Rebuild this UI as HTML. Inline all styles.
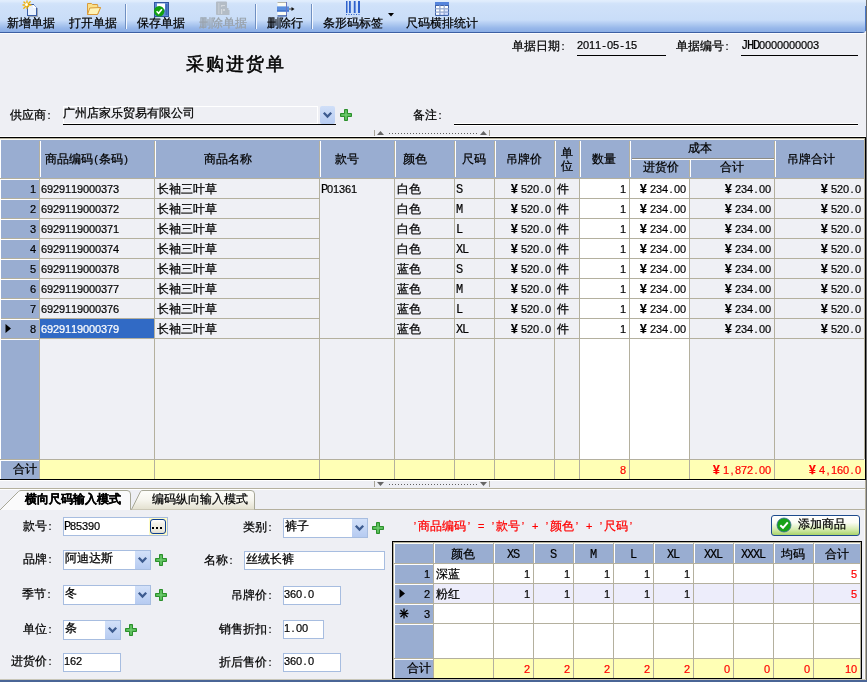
<!DOCTYPE html>
<html><head><meta charset="utf-8"><style>
html,body{margin:0;padding:0;}
body{width:867px;height:682px;overflow:hidden;position:relative;background:#eeeff4;font-family:'Liberation Sans',sans-serif;}
body>div,body>svg{position:absolute;}
.t{white-space:nowrap;will-change:transform;}
.s{will-change:transform;white-space:nowrap;font-size:12px;line-height:12px;height:12px;-webkit-text-stroke-width:0.25px;}
.s i.L{font-family:'Liberation Mono',monospace;font-size:12px;position:relative;top:1px}
.s i{-webkit-text-stroke-width:0.2px;display:inline-block;width:6px;text-align:center;font-style:normal;font-size:11px;vertical-align:top;height:12px;line-height:12px}
.s b.y{display:inline-block;width:12px;text-align:left;padding-left:2px;box-sizing:border-box;font-size:12px;font-weight:bold;vertical-align:top;height:12px;line-height:12px}
</style></head><body>
<div style="left:0;top:0;width:866px;height:33px;border-bottom-right-radius:4px;background:linear-gradient(to bottom,#e2eefd 0px,#dceafc 2px,#d3e4fa 3px,#cfe1f9 6px,#c9ddf8 20px,#bcd3f5 22px,#aac6ef 25px,#98b8ea 28px,#8aaee5 32px,#3c5fa3 32px,#3c5fa3 33px)"></div>
<div style="left:0px;top:33px;width:866px;height:1px;background:#fbfcfe;"></div>
<div style="left:865px;top:6px;width:1px;height:25px;background:#4a78c8;"></div>
<div style="left:125px;top:4px;width:1px;height:25px;background:#7090c2;"></div>
<div style="left:126px;top:4px;width:1px;height:25px;background:#f4f8ff;"></div>
<div style="left:255px;top:4px;width:1px;height:25px;background:#7090c2;"></div>
<div style="left:256px;top:4px;width:1px;height:25px;background:#f4f8ff;"></div>
<div style="left:311px;top:4px;width:1px;height:25px;background:#7090c2;"></div>
<div style="left:312px;top:4px;width:1px;height:25px;background:#f4f8ff;"></div>
<div class="s" style="left:7px;top:17px;color:#000">新增单据</div>
<div class="s" style="left:69px;top:17px;color:#000">打开单据</div>
<div class="s" style="left:137px;top:17px;color:#000">保存单据</div>
<div class="s" style="left:199px;top:17px;color:#98a0a8">删除单据</div>
<div class="s" style="left:267px;top:17px;color:#000">删除行</div>
<div class="s" style="left:323px;top:17px;color:#000">条形码标签</div>
<div class="s" style="left:406px;top:17px;color:#000">尺码横排统计</div>
<svg style="left:20px;top:0px" width="20" height="18" viewBox="0 0 20 18" shape-rendering="crispEdges">
<path d="M7 4 H13 L17 8 V16 H7 Z" fill="#eaf2fd"/>
<rect x="7" y="4" width="7" height="1" fill="#3a5ea6"/>
<rect x="7" y="4" width="1" height="12" fill="#3a5ea6"/>
<rect x="7" y="15" width="10" height="1" fill="#3a5ea6"/>
<rect x="16" y="8" width="1" height="8" fill="#3a5ea6"/>
<rect x="17" y="8" width="1" height="9" fill="#a0a8b4"/>
<rect x="8" y="16" width="10" height="1" fill="#a0a8b4"/>
<path d="M13 4.5 L16.5 8" stroke="#3a5ea6" stroke-width="1" shape-rendering="auto"/>
<path d="M13 5 V8 H16" fill="#ffffff"/>
<g stroke="#f2b000" stroke-width="1.3" stroke-linecap="round" shape-rendering="auto"><line x1="3" y1="5" x2="11" y2="5"/><line x1="7" y1="1" x2="7" y2="8.5"/><line x1="3.8" y1="8.2" x2="10.2" y2="1.8"/><line x1="4" y1="2" x2="8.5" y2="6.5"/></g>
<circle cx="6.5" cy="4.5" r="1.5" fill="#fffff0" shape-rendering="auto"/>
</svg>
<svg style="left:86px;top:1px" width="16" height="15" viewBox="0 0 16 15">
<path d="M1.5 2.5 L5.5 2.5 L6.5 3.5 L11.5 3.5 L12 6.5 L14.5 6.5 L11.5 13.5 L1.5 13.5 Z" fill="#fbe08a" stroke="#d79a3c" stroke-width="1"/>
<path d="M3.8 7 L14.5 6.5 L11.5 13.5 L1.5 13.5 Z" fill="#fff4b8" stroke="#d99a3a" stroke-width="1"/>
</svg>
<svg style="left:153px;top:1px" width="17" height="17" viewBox="0 0 17 17">
<rect x="1.5" y="1.5" width="14" height="14" fill="#5d8ad4" stroke="#2f55a0"/>
<rect x="4" y="2.5" width="8" height="6" fill="#ffffff"/>
<rect x="12.5" y="3" width="2" height="11" fill="#3d69b8"/>
<circle cx="6.2" cy="10.3" r="5.2" fill="#12a012"/>
<path d="M3.6 10.3 L5.6 12.3 L8.9 8.3" fill="none" stroke="#fff" stroke-width="1.6"/>
</svg>
<svg style="left:215px;top:1px" width="16" height="16" viewBox="0 0 16 16">
<path d="M2 0.5 H11 Q12 0.5 12 1.5 V7 H13.5 V9 H14.5 V14 H2 Q1 14 1 13 V1.5 Q1 0.5 2 0.5 Z" fill="#b3bcc6"/>
<rect x="3" y="2" width="1.5" height="11" fill="#c2c9d1"/>
<path d="M6 4.5 H10 M6 5.5 L7.5 4.5" stroke="#d4d9df" stroke-width="1.2"/>
<rect x="6" y="8" width="1.2" height="5" fill="#d4d9df"/>
<rect x="8" y="8" width="2" height="2" fill="#d0d6dc"/>
</svg>
<svg style="left:276px;top:1px" width="19" height="16" viewBox="0 0 19 16">
<rect x="1.5" y="1" width="8.5" height="4" fill="#fdfdf3"/>
<rect x="1.5" y="1" width="8.5" height="1" fill="#b4b4a8"/>
<rect x="1.5" y="10.5" width="8.5" height="4" fill="#fdfdf3"/>
<rect x="1" y="5.5" width="12" height="5" fill="#5a8ede"/>
<rect x="1" y="9.5" width="12" height="1" fill="#3060c0"/>
<rect x="10" y="1" width="1" height="14" fill="#6a78c0"/>
<rect x="1.5" y="14.3" width="9.5" height="1.2" fill="#2b4f9f"/>
<path d="M13 8 L16 8" stroke="#707070" stroke-width="1.4"/>
<path d="M15.5 6 L18.5 8 L15.5 10 Z" fill="#101010"/>
</svg>
<svg style="left:344px;top:0px" width="18" height="16" viewBox="0 0 18 16">
<g fill="#2f62cc"><rect x="2" y="1" width="1.5" height="12"/><rect x="5" y="1" width="1.8" height="12"/><rect x="9.8" y="1" width="1.8" height="12"/><rect x="14" y="1" width="2" height="12"/></g>
<g fill="#2f62cc"><rect x="2" y="14" width="1" height="1"/><rect x="4.5" y="14" width="1" height="1"/><rect x="7" y="14" width="1" height="1"/><rect x="9.5" y="14" width="1" height="1"/><rect x="12" y="14" width="1" height="1"/><rect x="14.5" y="14" width="1" height="1"/></g>
</svg>
<svg style="left:388px;top:13px" width="6" height="4" viewBox="0 0 6 4"><path d="M0 0 L6 0 L3 3.5 Z" fill="#000"/></svg>
<svg style="left:434px;top:1px" width="16" height="15" viewBox="0 0 16 15">
<rect x="1" y="1" width="14" height="14" rx="1" fill="#3f62a8"/>
<rect x="1" y="1" width="14" height="3" fill="#5584dc"/>
<g fill="#ffffff"><rect x="2" y="5" width="3.5" height="2.5"/><rect x="6.3" y="5" width="3.5" height="2.5"/><rect x="10.5" y="5" width="3.5" height="2.5"/>
<rect x="2" y="8.2" width="3.5" height="2.5"/><rect x="6.3" y="8.2" width="3.5" height="2.5"/><rect x="10.5" y="8.2" width="3.5" height="2.5" fill="#dde6ff"/>
<rect x="2" y="11.4" width="3.5" height="2.5"/><rect x="6.3" y="11.4" width="3.5" height="2.5" fill="#e6ebff"/><rect x="10.5" y="11.4" width="3.5" height="2.5" fill="#cfdcff"/></g>
<g fill="#b8c6e0"><rect x="1" y="7.6" width="14" height="0.6"/><rect x="1" y="10.8" width="14" height="0.6"/><rect x="5.6" y="4" width="0.6" height="10"/><rect x="9.9" y="4" width="0.6" height="10"/></g>
</svg>
<div class="t" style="left:186px;top:54px;font-size:18px;letter-spacing:2px;line-height:20px;-webkit-text-stroke:0.55px #000">采购进货单</div>
<div class="s" style="left:512px;top:40px;color:#000">单据日期<i>:</i></div>
<div class="s" style="left:577px;top:39px;color:#000"><i>2</i><i>0</i><i>1</i><i>1</i><i>-</i><i>0</i><i>5</i><i>-</i><i>1</i><i>5</i></div>
<div style="left:577px;top:55px;width:89px;height:1px;background:#000;"></div>
<div class="s" style="left:676px;top:40px;color:#000">单据编号<i>:</i></div>
<div class="s" style="left:741px;top:39px;color:#000"><i class="L">J</i><i class="L">H</i><i class="L">D</i><i>0</i><i>0</i><i>0</i><i>0</i><i>0</i><i>0</i><i>0</i><i>0</i><i>0</i><i>3</i></div>
<div style="left:741px;top:55px;width:117px;height:1px;background:#000;"></div>
<div class="s" style="left:10px;top:109px;color:#000">供应商<i>:</i></div>
<div style="left:63px;top:106px;width:253px;height:16px;border:1px solid #ffffff"></div>
<div class="s" style="left:63px;top:107px;color:#000">广州店家乐贸易有限公司</div>
<div style="left:63px;top:124px;width:273px;height:1px;background:#000;"></div>
<div style="left:320px;top:106px;width:15px;height:18px;background:linear-gradient(#d0dff8,#b7ccf2);border-radius:2px"></div>
<svg style="left:322px;top:111px" width="11" height="8" viewBox="0 0 11 8"><path d="M1.8 1.8 L5.5 5.5 L9.2 1.8" fill="none" stroke="#3d5b8f" stroke-width="2.3"/></svg>
<svg style="left:340px;top:109px" width="13" height="13" viewBox="0 0 13 13"><path d="M4.5 0.5 H7.5 V4.5 H11.5 V7.5 H7.5 V11.5 H4.5 V7.5 H0.5 V4.5 H4.5 Z" fill="#45b045" stroke="#2b8f2b" stroke-width="1"/><path d="M6 1.5 V10.5 M1.5 6 H10.5" stroke="#86d886" stroke-width="1" opacity="0.8"/></svg>
<div class="s" style="left:413px;top:109px;color:#000">备注<i>:</i></div>
<div style="left:454px;top:123px;width:404px;height:1px;background:#ffffff;"></div>
<div style="left:454px;top:124px;width:404px;height:1px;background:#000;"></div>
<div style="left:454px;top:125px;width:404px;height:1px;background:#ffffff;"></div>
<div style="left:374px;top:130px;width:1px;height:6px;background:#a8a498;"></div>
<div style="left:489px;top:130px;width:1px;height:6px;background:#a8a498;"></div>
<svg style="left:377px;top:131px" width="7" height="4" viewBox="0 0 7 4"><path d="M0 4 L3.5 0 L7 4 Z" fill="#666"/></svg>
<svg style="left:480px;top:131px" width="7" height="4" viewBox="0 0 7 4"><path d="M0 4 L3.5 0 L7 4 Z" fill="#666"/></svg>
<div style="left:389px;top:133px;width:88px;height:1px;background:repeating-linear-gradient(to right,#606060 0 1px,transparent 1px 3px)"></div>
<div style="left:0px;top:136px;width:866px;height:1px;background:#ffffff;"></div>
<div style="left:0px;top:137px;width:866px;height:1px;background:#000;"></div>
<div style="left:865px;top:137px;width:1px;height:343px;background:#000;"></div>
<div style="left:0px;top:479px;width:866px;height:1px;background:#000;"></div>
<div style="left:0px;top:138px;width:865px;height:1px;background:#b4b09e;"></div>
<div style="left:864px;top:138px;width:1px;height:321px;background:#b4b09e;"></div>
<div style="left:0px;top:139px;width:864px;height:39px;background:#99add1;"></div>
<div style="left:0px;top:139px;width:864px;height:1px;background:#fbfbf4;"></div>
<div style="left:0px;top:140px;width:1px;height:38px;background:#ffffff;"></div>
<div style="left:0px;top:178px;width:864px;height:1px;background:#b4b09e;"></div>
<div style="left:0px;top:179px;width:864px;height:280px;background:#eff0f5;"></div>
<div style="left:0px;top:179px;width:39px;height:280px;background:#99add1;"></div>
<div style="left:580px;top:179px;width:49px;height:280px;background:#ffffff;"></div>
<div style="left:630px;top:179px;width:59px;height:280px;background:#ffffff;"></div>
<div style="left:39px;top:141px;width:1px;height:36px;background:#b4b09e;"></div>
<div style="left:40px;top:141px;width:1px;height:36px;background:#ffffff;"></div>
<div style="left:154px;top:141px;width:1px;height:36px;background:#b4b09e;"></div>
<div style="left:155px;top:141px;width:1px;height:36px;background:#ffffff;"></div>
<div style="left:319px;top:141px;width:1px;height:36px;background:#b4b09e;"></div>
<div style="left:320px;top:141px;width:1px;height:36px;background:#ffffff;"></div>
<div style="left:394px;top:141px;width:1px;height:36px;background:#b4b09e;"></div>
<div style="left:395px;top:141px;width:1px;height:36px;background:#ffffff;"></div>
<div style="left:454px;top:141px;width:1px;height:36px;background:#b4b09e;"></div>
<div style="left:455px;top:141px;width:1px;height:36px;background:#ffffff;"></div>
<div style="left:494px;top:141px;width:1px;height:36px;background:#b4b09e;"></div>
<div style="left:495px;top:141px;width:1px;height:36px;background:#ffffff;"></div>
<div style="left:554px;top:141px;width:1px;height:36px;background:#b4b09e;"></div>
<div style="left:555px;top:141px;width:1px;height:36px;background:#ffffff;"></div>
<div style="left:579px;top:141px;width:1px;height:36px;background:#b4b09e;"></div>
<div style="left:580px;top:141px;width:1px;height:36px;background:#ffffff;"></div>
<div style="left:629px;top:141px;width:1px;height:36px;background:#b4b09e;"></div>
<div style="left:630px;top:141px;width:1px;height:36px;background:#ffffff;"></div>
<div style="left:689px;top:160px;width:1px;height:17px;background:#b4b09e;"></div>
<div style="left:690px;top:160px;width:1px;height:17px;background:#ffffff;"></div>
<div style="left:774px;top:141px;width:1px;height:36px;background:#b4b09e;"></div>
<div style="left:775px;top:141px;width:1px;height:36px;background:#ffffff;"></div>
<div style="left:632px;top:158px;width:142px;height:1px;background:#8e8c84;"></div>
<div style="left:632px;top:159px;width:142px;height:1px;background:#ffffff;"></div>
<div style="left:39px;top:179px;width:1px;height:280px;background:#b4b09e;"></div>
<div style="left:154px;top:179px;width:1px;height:280px;background:#b4b09e;"></div>
<div style="left:319px;top:179px;width:1px;height:280px;background:#b4b09e;"></div>
<div style="left:394px;top:179px;width:1px;height:280px;background:#b4b09e;"></div>
<div style="left:454px;top:179px;width:1px;height:280px;background:#b4b09e;"></div>
<div style="left:494px;top:179px;width:1px;height:280px;background:#b4b09e;"></div>
<div style="left:554px;top:179px;width:1px;height:280px;background:#b4b09e;"></div>
<div style="left:579px;top:179px;width:1px;height:280px;background:#b4b09e;"></div>
<div style="left:629px;top:179px;width:1px;height:280px;background:#b4b09e;"></div>
<div style="left:689px;top:179px;width:1px;height:280px;background:#b4b09e;"></div>
<div style="left:774px;top:179px;width:1px;height:280px;background:#b4b09e;"></div>
<div style="left:0px;top:198px;width:319px;height:1px;background:#b4b09e;"></div>
<div style="left:394px;top:198px;width:470px;height:1px;background:#b4b09e;"></div>
<div style="left:1px;top:199px;width:38px;height:1px;background:#ffffff;"></div>
<div style="left:0px;top:218px;width:319px;height:1px;background:#b4b09e;"></div>
<div style="left:394px;top:218px;width:470px;height:1px;background:#b4b09e;"></div>
<div style="left:1px;top:219px;width:38px;height:1px;background:#ffffff;"></div>
<div style="left:0px;top:238px;width:319px;height:1px;background:#b4b09e;"></div>
<div style="left:394px;top:238px;width:470px;height:1px;background:#b4b09e;"></div>
<div style="left:1px;top:239px;width:38px;height:1px;background:#ffffff;"></div>
<div style="left:0px;top:258px;width:319px;height:1px;background:#b4b09e;"></div>
<div style="left:394px;top:258px;width:470px;height:1px;background:#b4b09e;"></div>
<div style="left:1px;top:259px;width:38px;height:1px;background:#ffffff;"></div>
<div style="left:0px;top:278px;width:319px;height:1px;background:#b4b09e;"></div>
<div style="left:394px;top:278px;width:470px;height:1px;background:#b4b09e;"></div>
<div style="left:1px;top:279px;width:38px;height:1px;background:#ffffff;"></div>
<div style="left:0px;top:298px;width:319px;height:1px;background:#b4b09e;"></div>
<div style="left:394px;top:298px;width:470px;height:1px;background:#b4b09e;"></div>
<div style="left:1px;top:299px;width:38px;height:1px;background:#ffffff;"></div>
<div style="left:0px;top:318px;width:319px;height:1px;background:#b4b09e;"></div>
<div style="left:394px;top:318px;width:470px;height:1px;background:#b4b09e;"></div>
<div style="left:1px;top:319px;width:38px;height:1px;background:#ffffff;"></div>
<div style="left:0px;top:338px;width:319px;height:1px;background:#b4b09e;"></div>
<div style="left:394px;top:338px;width:470px;height:1px;background:#b4b09e;"></div>
<div style="left:319px;top:338px;width:75px;height:1px;background:#b4b09e;"></div>
<div style="left:1px;top:339px;width:38px;height:1px;background:#ffffff;"></div>
<div style="left:1px;top:179px;width:38px;height:1px;background:#ffffff;"></div>
<div style="left:0px;top:179px;width:1px;height:280px;background:#ffffff;"></div>
<div style="left:0px;top:459px;width:864px;height:1px;background:#b4b09e;"></div>
<div style="left:0px;top:460px;width:865px;height:19px;background:#ffffb5;"></div>
<div style="left:0px;top:460px;width:39px;height:19px;background:#99add1;"></div>
<div style="left:1px;top:460px;width:38px;height:1px;background:#ffffff;"></div>
<div style="left:0px;top:460px;width:1px;height:19px;background:#ffffff;"></div>
<div style="left:39px;top:460px;width:1px;height:19px;background:#b4b09e;"></div>
<div style="left:154px;top:460px;width:1px;height:19px;background:#b4b09e;"></div>
<div style="left:319px;top:460px;width:1px;height:19px;background:#b4b09e;"></div>
<div style="left:394px;top:460px;width:1px;height:19px;background:#b4b09e;"></div>
<div style="left:454px;top:460px;width:1px;height:19px;background:#b4b09e;"></div>
<div style="left:494px;top:460px;width:1px;height:19px;background:#b4b09e;"></div>
<div style="left:554px;top:460px;width:1px;height:19px;background:#b4b09e;"></div>
<div style="left:579px;top:460px;width:1px;height:19px;background:#b4b09e;"></div>
<div style="left:629px;top:460px;width:1px;height:19px;background:#b4b09e;"></div>
<div style="left:689px;top:460px;width:1px;height:19px;background:#b4b09e;"></div>
<div style="left:774px;top:460px;width:1px;height:19px;background:#b4b09e;"></div>
<div class="s" style="left:45px;top:153px;color:#000">商品编码<i>(</i>条码<i>)</i></div>
<div class="s" style="left:204px;top:153px;color:#000">商品名称</div>
<div class="s" style="left:335px;top:153px;color:#000">款号</div>
<div class="s" style="left:403px;top:153px;color:#000">颜色</div>
<div class="s" style="left:462px;top:153px;color:#000">尺码</div>
<div class="s" style="left:506px;top:153px;color:#000">吊牌价</div>
<div class="s" style="left:561px;top:147px;color:#000">单</div>
<div class="s" style="left:561px;top:160px;color:#000">位</div>
<div class="s" style="left:592px;top:153px;color:#000">数量</div>
<div class="s" style="left:688px;top:142px;color:#000">成本</div>
<div class="s" style="left:643px;top:161px;color:#000">进货价</div>
<div class="s" style="left:720px;top:161px;color:#000">合计</div>
<div class="s" style="left:787px;top:153px;color:#000">吊牌合计</div>
<div class="s" style="left:30px;top:183px;color:#000"><i>1</i></div>
<div class="s" style="left:41px;top:183px;color:#000"><i>6</i><i>9</i><i>2</i><i>9</i><i>1</i><i>1</i><i>9</i><i>0</i><i>0</i><i>0</i><i>3</i><i>7</i><i>3</i></div>
<div class="s" style="left:157px;top:183px;color:#000">长袖三叶草</div>
<div class="s" style="left:397px;top:183px;color:#000">白色</div>
<div class="s" style="left:456px;top:183px;color:#000"><i class="L">S</i></div>
<div class="s" style="left:509px;top:183px;color:#000"><b class="y">¥</b><i>5</i><i>2</i><i>0</i><i>.</i><i>0</i></div>
<div class="s" style="left:557px;top:183px;color:#000">件</div>
<div class="s" style="left:620px;top:183px;color:#000"><i>1</i></div>
<div class="s" style="left:638px;top:183px;color:#000"><b class="y">¥</b><i>2</i><i>3</i><i>4</i><i>.</i><i>0</i><i>0</i></div>
<div class="s" style="left:723px;top:183px;color:#000"><b class="y">¥</b><i>2</i><i>3</i><i>4</i><i>.</i><i>0</i><i>0</i></div>
<div class="s" style="left:819px;top:183px;color:#000"><b class="y">¥</b><i>5</i><i>2</i><i>0</i><i>.</i><i>0</i></div>
<div class="s" style="left:30px;top:203px;color:#000"><i>2</i></div>
<div class="s" style="left:41px;top:203px;color:#000"><i>6</i><i>9</i><i>2</i><i>9</i><i>1</i><i>1</i><i>9</i><i>0</i><i>0</i><i>0</i><i>3</i><i>7</i><i>2</i></div>
<div class="s" style="left:157px;top:203px;color:#000">长袖三叶草</div>
<div class="s" style="left:397px;top:203px;color:#000">白色</div>
<div class="s" style="left:456px;top:203px;color:#000"><i class="L">M</i></div>
<div class="s" style="left:509px;top:203px;color:#000"><b class="y">¥</b><i>5</i><i>2</i><i>0</i><i>.</i><i>0</i></div>
<div class="s" style="left:557px;top:203px;color:#000">件</div>
<div class="s" style="left:620px;top:203px;color:#000"><i>1</i></div>
<div class="s" style="left:638px;top:203px;color:#000"><b class="y">¥</b><i>2</i><i>3</i><i>4</i><i>.</i><i>0</i><i>0</i></div>
<div class="s" style="left:723px;top:203px;color:#000"><b class="y">¥</b><i>2</i><i>3</i><i>4</i><i>.</i><i>0</i><i>0</i></div>
<div class="s" style="left:819px;top:203px;color:#000"><b class="y">¥</b><i>5</i><i>2</i><i>0</i><i>.</i><i>0</i></div>
<div class="s" style="left:30px;top:223px;color:#000"><i>3</i></div>
<div class="s" style="left:41px;top:223px;color:#000"><i>6</i><i>9</i><i>2</i><i>9</i><i>1</i><i>1</i><i>9</i><i>0</i><i>0</i><i>0</i><i>3</i><i>7</i><i>1</i></div>
<div class="s" style="left:157px;top:223px;color:#000">长袖三叶草</div>
<div class="s" style="left:397px;top:223px;color:#000">白色</div>
<div class="s" style="left:456px;top:223px;color:#000"><i class="L">L</i></div>
<div class="s" style="left:509px;top:223px;color:#000"><b class="y">¥</b><i>5</i><i>2</i><i>0</i><i>.</i><i>0</i></div>
<div class="s" style="left:557px;top:223px;color:#000">件</div>
<div class="s" style="left:620px;top:223px;color:#000"><i>1</i></div>
<div class="s" style="left:638px;top:223px;color:#000"><b class="y">¥</b><i>2</i><i>3</i><i>4</i><i>.</i><i>0</i><i>0</i></div>
<div class="s" style="left:723px;top:223px;color:#000"><b class="y">¥</b><i>2</i><i>3</i><i>4</i><i>.</i><i>0</i><i>0</i></div>
<div class="s" style="left:819px;top:223px;color:#000"><b class="y">¥</b><i>5</i><i>2</i><i>0</i><i>.</i><i>0</i></div>
<div class="s" style="left:30px;top:243px;color:#000"><i>4</i></div>
<div class="s" style="left:41px;top:243px;color:#000"><i>6</i><i>9</i><i>2</i><i>9</i><i>1</i><i>1</i><i>9</i><i>0</i><i>0</i><i>0</i><i>3</i><i>7</i><i>4</i></div>
<div class="s" style="left:157px;top:243px;color:#000">长袖三叶草</div>
<div class="s" style="left:397px;top:243px;color:#000">白色</div>
<div class="s" style="left:456px;top:243px;color:#000"><i class="L">X</i><i class="L">L</i></div>
<div class="s" style="left:509px;top:243px;color:#000"><b class="y">¥</b><i>5</i><i>2</i><i>0</i><i>.</i><i>0</i></div>
<div class="s" style="left:557px;top:243px;color:#000">件</div>
<div class="s" style="left:620px;top:243px;color:#000"><i>1</i></div>
<div class="s" style="left:638px;top:243px;color:#000"><b class="y">¥</b><i>2</i><i>3</i><i>4</i><i>.</i><i>0</i><i>0</i></div>
<div class="s" style="left:723px;top:243px;color:#000"><b class="y">¥</b><i>2</i><i>3</i><i>4</i><i>.</i><i>0</i><i>0</i></div>
<div class="s" style="left:819px;top:243px;color:#000"><b class="y">¥</b><i>5</i><i>2</i><i>0</i><i>.</i><i>0</i></div>
<div class="s" style="left:30px;top:263px;color:#000"><i>5</i></div>
<div class="s" style="left:41px;top:263px;color:#000"><i>6</i><i>9</i><i>2</i><i>9</i><i>1</i><i>1</i><i>9</i><i>0</i><i>0</i><i>0</i><i>3</i><i>7</i><i>8</i></div>
<div class="s" style="left:157px;top:263px;color:#000">长袖三叶草</div>
<div class="s" style="left:397px;top:263px;color:#000">蓝色</div>
<div class="s" style="left:456px;top:263px;color:#000"><i class="L">S</i></div>
<div class="s" style="left:509px;top:263px;color:#000"><b class="y">¥</b><i>5</i><i>2</i><i>0</i><i>.</i><i>0</i></div>
<div class="s" style="left:557px;top:263px;color:#000">件</div>
<div class="s" style="left:620px;top:263px;color:#000"><i>1</i></div>
<div class="s" style="left:638px;top:263px;color:#000"><b class="y">¥</b><i>2</i><i>3</i><i>4</i><i>.</i><i>0</i><i>0</i></div>
<div class="s" style="left:723px;top:263px;color:#000"><b class="y">¥</b><i>2</i><i>3</i><i>4</i><i>.</i><i>0</i><i>0</i></div>
<div class="s" style="left:819px;top:263px;color:#000"><b class="y">¥</b><i>5</i><i>2</i><i>0</i><i>.</i><i>0</i></div>
<div class="s" style="left:30px;top:283px;color:#000"><i>6</i></div>
<div class="s" style="left:41px;top:283px;color:#000"><i>6</i><i>9</i><i>2</i><i>9</i><i>1</i><i>1</i><i>9</i><i>0</i><i>0</i><i>0</i><i>3</i><i>7</i><i>7</i></div>
<div class="s" style="left:157px;top:283px;color:#000">长袖三叶草</div>
<div class="s" style="left:397px;top:283px;color:#000">蓝色</div>
<div class="s" style="left:456px;top:283px;color:#000"><i class="L">M</i></div>
<div class="s" style="left:509px;top:283px;color:#000"><b class="y">¥</b><i>5</i><i>2</i><i>0</i><i>.</i><i>0</i></div>
<div class="s" style="left:557px;top:283px;color:#000">件</div>
<div class="s" style="left:620px;top:283px;color:#000"><i>1</i></div>
<div class="s" style="left:638px;top:283px;color:#000"><b class="y">¥</b><i>2</i><i>3</i><i>4</i><i>.</i><i>0</i><i>0</i></div>
<div class="s" style="left:723px;top:283px;color:#000"><b class="y">¥</b><i>2</i><i>3</i><i>4</i><i>.</i><i>0</i><i>0</i></div>
<div class="s" style="left:819px;top:283px;color:#000"><b class="y">¥</b><i>5</i><i>2</i><i>0</i><i>.</i><i>0</i></div>
<div class="s" style="left:30px;top:303px;color:#000"><i>7</i></div>
<div class="s" style="left:41px;top:303px;color:#000"><i>6</i><i>9</i><i>2</i><i>9</i><i>1</i><i>1</i><i>9</i><i>0</i><i>0</i><i>0</i><i>3</i><i>7</i><i>6</i></div>
<div class="s" style="left:157px;top:303px;color:#000">长袖三叶草</div>
<div class="s" style="left:397px;top:303px;color:#000">蓝色</div>
<div class="s" style="left:456px;top:303px;color:#000"><i class="L">L</i></div>
<div class="s" style="left:509px;top:303px;color:#000"><b class="y">¥</b><i>5</i><i>2</i><i>0</i><i>.</i><i>0</i></div>
<div class="s" style="left:557px;top:303px;color:#000">件</div>
<div class="s" style="left:620px;top:303px;color:#000"><i>1</i></div>
<div class="s" style="left:638px;top:303px;color:#000"><b class="y">¥</b><i>2</i><i>3</i><i>4</i><i>.</i><i>0</i><i>0</i></div>
<div class="s" style="left:723px;top:303px;color:#000"><b class="y">¥</b><i>2</i><i>3</i><i>4</i><i>.</i><i>0</i><i>0</i></div>
<div class="s" style="left:819px;top:303px;color:#000"><b class="y">¥</b><i>5</i><i>2</i><i>0</i><i>.</i><i>0</i></div>
<div class="s" style="left:30px;top:323px;color:#000"><i>8</i></div>
<div style="left:40px;top:319px;width:114px;height:19px;background:#316ac5;"></div>
<div class="s" style="left:41px;top:323px;color:#fff"><i>6</i><i>9</i><i>2</i><i>9</i><i>1</i><i>1</i><i>9</i><i>0</i><i>0</i><i>0</i><i>3</i><i>7</i><i>9</i></div>
<svg style="left:5px;top:324px" width="7" height="10" viewBox="0 0 7 10"><path d="M0.5 0 L6 4.5 L0.5 9 Z" fill="#000"/></svg>
<div class="s" style="left:157px;top:323px;color:#000">长袖三叶草</div>
<div class="s" style="left:397px;top:323px;color:#000">蓝色</div>
<div class="s" style="left:456px;top:323px;color:#000"><i class="L">X</i><i class="L">L</i></div>
<div class="s" style="left:509px;top:323px;color:#000"><b class="y">¥</b><i>5</i><i>2</i><i>0</i><i>.</i><i>0</i></div>
<div class="s" style="left:557px;top:323px;color:#000">件</div>
<div class="s" style="left:620px;top:323px;color:#000"><i>1</i></div>
<div class="s" style="left:638px;top:323px;color:#000"><b class="y">¥</b><i>2</i><i>3</i><i>4</i><i>.</i><i>0</i><i>0</i></div>
<div class="s" style="left:723px;top:323px;color:#000"><b class="y">¥</b><i>2</i><i>3</i><i>4</i><i>.</i><i>0</i><i>0</i></div>
<div class="s" style="left:819px;top:323px;color:#000"><b class="y">¥</b><i>5</i><i>2</i><i>0</i><i>.</i><i>0</i></div>
<div class="s" style="left:321px;top:183px;color:#000"><i class="L">P</i><i>0</i><i>1</i><i>3</i><i>6</i><i>1</i></div>
<div class="s" style="left:13px;top:463px;color:#000">合计</div>
<div class="s" style="left:620px;top:464px;color:#ff0000"><i>8</i></div>
<div class="s" style="left:711px;top:464px;color:#ff0000"><b class="y">¥</b><i>1</i><i>,</i><i>8</i><i>7</i><i>2</i><i>.</i><i>0</i><i>0</i></div>
<div class="s" style="left:807px;top:464px;color:#ff0000"><b class="y">¥</b><i>4</i><i>,</i><i>1</i><i>6</i><i>0</i><i>.</i><i>0</i></div>
<div style="left:0px;top:480px;width:865px;height:1px;background:#ffffff;"></div>
<div style="left:374px;top:481px;width:1px;height:6px;background:#a8a498;"></div>
<div style="left:489px;top:481px;width:1px;height:6px;background:#a8a498;"></div>
<svg style="left:377px;top:482px" width="7" height="4" viewBox="0 0 7 4"><path d="M0 0 L3.5 4 L7 0 Z" fill="#666"/></svg>
<svg style="left:480px;top:482px" width="7" height="4" viewBox="0 0 7 4"><path d="M0 0 L3.5 4 L7 0 Z" fill="#666"/></svg>
<div style="left:389px;top:484px;width:88px;height:1px;background:repeating-linear-gradient(to right,#606060 0 1px,transparent 1px 3px)"></div>
<div style="left:0px;top:488px;width:865px;height:1px;background:#b4b09e;"></div>
<div style="left:0px;top:489px;width:865px;height:1px;background:#ffffff;"></div>
<div style="left:866px;top:0px;width:1px;height:682px;background:#6e6e6e;"></div>
<div style="left:865px;top:480px;width:1px;height:200px;background:#b4b09e;"></div>
<div style="left:0px;top:509px;width:865px;height:1px;background:#b4b09e;"></div>
<svg style="left:0;top:489px" width="270" height="22" viewBox="0 0 270 22"><defs><linearGradient id="tg" x1="0" y1="0" x2="0" y2="1"><stop offset="0" stop-color="#fefefb"/><stop offset="0.5" stop-color="#f6f5ee"/><stop offset="1" stop-color="#e3e0cf"/></linearGradient></defs><path d="M131.5 20.5 L140.5 2.5 Q141 1.5 143 1.5 L251 1.5 Q254.5 1.5 254.5 5 L254.5 20.5" fill="url(#tg)" stroke="#a7a797" stroke-width="1"/><path d="M0.5 20.5 L18.5 2.5 Q19.5 1.5 21 1.5 L127 1.5 Q130.5 1.5 130.5 5 L130.5 20.5" fill="#fafafb" stroke="#a7a797" stroke-width="1"/><rect x="1" y="20" width="129" height="1" fill="#fafafb"/></svg>
<div class="s" style="left:25px;top:493px;color:#000;font-weight:bold">横向尺码输入模式</div>
<div class="s" style="left:152px;top:493px;color:#000">编码纵向输入模式</div>
<div style="left:0px;top:510px;width:865px;height:170px;background:#eeeff4;"></div>
<div style="left:864px;top:510px;width:1px;height:169px;background:#fafafc;"></div>
<div style="left:0px;top:679px;width:866px;height:1px;background:#c8c6b8;"></div>
<div style="left:0px;top:680px;width:867px;height:2px;background:#4a6596;"></div>
<div class="s" style="left:23px;top:520px;color:#000">款号<i>:</i></div>
<div style="left:63px;top:517px;width:103px;height:17px;background:#fff;border:1px solid #a7bde0"></div>
<div class="s" style="left:64px;top:520px;color:#000"><i class="L">P</i><i>8</i><i>5</i><i>3</i><i>9</i><i>0</i></div>
<div style="left:149px;top:518px;width:18px;height:17px;background:#fffcc4;"></div>
<div style="left:150px;top:519px;width:14px;height:13px;border:1px solid #0c3e8e;border-radius:3px;background:linear-gradient(#ffffff 0%,#f2f1e8 30%,#ebe9dc 85%,#dcdad0 100%)"></div>
<div style="left:152px;top:527px;width:2px;height:2px;background:#000;"></div>
<div style="left:156px;top:527px;width:2px;height:2px;background:#000;"></div>
<div style="left:160px;top:527px;width:2px;height:2px;background:#000;"></div>
<div class="s" style="left:243px;top:521px;color:#000">类别<i>:</i></div>
<div style="left:283px;top:518px;width:83px;height:18px;background:#fff;border:1px solid #a7bde0"></div>
<div style="left:352px;top:519px;width:15px;height:18px;background:linear-gradient(#d3e1f9,#b6cbf1)"></div>
<svg style="left:354px;top:524px" width="11" height="8" viewBox="0 0 11 8"><path d="M1.8 1.8 L5.5 5.5 L9.2 1.8" fill="none" stroke="#3d5b8f" stroke-width="2.3"/></svg>
<div class="s" style="left:285px;top:520px;color:#000">裤子</div>
<svg style="left:372px;top:522px" width="13" height="13" viewBox="0 0 13 13"><path d="M4.5 0.5 H7.5 V4.5 H11.5 V7.5 H7.5 V11.5 H4.5 V7.5 H0.5 V4.5 H4.5 Z" fill="#45b045" stroke="#2b8f2b" stroke-width="1"/><path d="M6 1.5 V10.5 M1.5 6 H10.5" stroke="#86d886" stroke-width="1" opacity="0.8"/></svg>
<div class="s" style="left:412px;top:520px;color:#ff0000"><i>’</i>商品编码<i>’</i><i>&nbsp;</i><i>=</i><i>&nbsp;</i><i>’</i>款号<i>’</i><i>&nbsp;</i><i>+</i><i>&nbsp;</i><i>’</i>颜色<i>’</i><i>&nbsp;</i><i>+</i><i>&nbsp;</i><i>’</i>尺码<i>’</i></div>
<div style="left:771px;top:515px;width:87px;height:19px;border:1px solid #1d4a8c;border-radius:3px;background:linear-gradient(#ffffff 0%,#fafcf4 35%,#d6ecb0 70%,#a9d46a 100%)"></div>
<svg style="left:776px;top:517px" width="16" height="16" viewBox="0 0 16 16"><circle cx="8" cy="8" r="7" fill="#17a117" stroke="#3a6a9a" stroke-width="0.8"/><path d="M4.3 8.2 L7 10.8 L11.8 5.3" fill="none" stroke="#fff" stroke-width="2"/></svg>
<div class="s" style="left:798px;top:518px;color:#000">添加商品</div>
<div class="s" style="left:23px;top:553px;color:#000">品牌<i>:</i></div>
<div style="left:63px;top:550px;width:86px;height:18px;background:#fff;border:1px solid #a7bde0"></div>
<div style="left:135px;top:551px;width:15px;height:18px;background:linear-gradient(#d3e1f9,#b6cbf1)"></div>
<svg style="left:137px;top:556px" width="11" height="8" viewBox="0 0 11 8"><path d="M1.8 1.8 L5.5 5.5 L9.2 1.8" fill="none" stroke="#3d5b8f" stroke-width="2.3"/></svg>
<div class="s" style="left:65px;top:552px;color:#000">阿迪达斯</div>
<svg style="left:155px;top:554px" width="13" height="13" viewBox="0 0 13 13"><path d="M4.5 0.5 H7.5 V4.5 H11.5 V7.5 H7.5 V11.5 H4.5 V7.5 H0.5 V4.5 H4.5 Z" fill="#45b045" stroke="#2b8f2b" stroke-width="1"/><path d="M6 1.5 V10.5 M1.5 6 H10.5" stroke="#86d886" stroke-width="1" opacity="0.8"/></svg>
<div class="s" style="left:204px;top:554px;color:#000">名称<i>:</i></div>
<div style="left:244px;top:551px;width:139px;height:17px;background:#fff;border:1px solid #a7bde0"></div>
<div class="s" style="left:246px;top:553px;color:#000">丝绒长裤</div>
<div class="s" style="left:22px;top:588px;color:#000">季节<i>:</i></div>
<div style="left:63px;top:585px;width:86px;height:18px;background:#fff;border:1px solid #a7bde0"></div>
<div style="left:135px;top:586px;width:15px;height:18px;background:linear-gradient(#d3e1f9,#b6cbf1)"></div>
<svg style="left:137px;top:591px" width="11" height="8" viewBox="0 0 11 8"><path d="M1.8 1.8 L5.5 5.5 L9.2 1.8" fill="none" stroke="#3d5b8f" stroke-width="2.3"/></svg>
<div class="s" style="left:65px;top:587px;color:#000">冬</div>
<svg style="left:155px;top:589px" width="13" height="13" viewBox="0 0 13 13"><path d="M4.5 0.5 H7.5 V4.5 H11.5 V7.5 H7.5 V11.5 H4.5 V7.5 H0.5 V4.5 H4.5 Z" fill="#45b045" stroke="#2b8f2b" stroke-width="1"/><path d="M6 1.5 V10.5 M1.5 6 H10.5" stroke="#86d886" stroke-width="1" opacity="0.8"/></svg>
<div class="s" style="left:231px;top:589px;color:#000">吊牌价<i>:</i></div>
<div style="left:283px;top:586px;width:56px;height:17px;background:#fff;border:1px solid #a7bde0"></div>
<div class="s" style="left:284px;top:588px;color:#000"><i>3</i><i>6</i><i>0</i><i>.</i><i>0</i></div>
<div class="s" style="left:23px;top:623px;color:#000">单位<i>:</i></div>
<div style="left:63px;top:620px;width:56px;height:18px;background:#fff;border:1px solid #a7bde0"></div>
<div style="left:105px;top:621px;width:15px;height:18px;background:linear-gradient(#d3e1f9,#b6cbf1)"></div>
<svg style="left:107px;top:626px" width="11" height="8" viewBox="0 0 11 8"><path d="M1.8 1.8 L5.5 5.5 L9.2 1.8" fill="none" stroke="#3d5b8f" stroke-width="2.3"/></svg>
<div class="s" style="left:65px;top:622px;color:#000">条</div>
<svg style="left:125px;top:624px" width="13" height="13" viewBox="0 0 13 13"><path d="M4.5 0.5 H7.5 V4.5 H11.5 V7.5 H7.5 V11.5 H4.5 V7.5 H0.5 V4.5 H4.5 Z" fill="#45b045" stroke="#2b8f2b" stroke-width="1"/><path d="M6 1.5 V10.5 M1.5 6 H10.5" stroke="#86d886" stroke-width="1" opacity="0.8"/></svg>
<div class="s" style="left:219px;top:623px;color:#000">销售折扣<i>:</i></div>
<div style="left:283px;top:620px;width:39px;height:17px;background:#fff;border:1px solid #a7bde0"></div>
<div class="s" style="left:284px;top:622px;color:#000"><i>1</i><i>.</i><i>0</i><i>0</i></div>
<div class="s" style="left:11px;top:655px;color:#000">进货价<i>:</i></div>
<div style="left:63px;top:653px;width:56px;height:17px;background:#fff;border:1px solid #a7bde0"></div>
<div class="s" style="left:64px;top:655px;color:#000"><i>1</i><i>6</i><i>2</i></div>
<div class="s" style="left:219px;top:656px;color:#000">折后售价<i>:</i></div>
<div style="left:283px;top:653px;width:56px;height:17px;background:#fff;border:1px solid #a7bde0"></div>
<div class="s" style="left:284px;top:655px;color:#000"><i>3</i><i>6</i><i>0</i><i>.</i><i>0</i></div>
<div style="left:392px;top:541px;width:470px;height:138px;background:#000;"></div>
<div style="left:393px;top:542px;width:468px;height:136px;background:#b4b09e;"></div>
<div style="left:394px;top:543px;width:466px;height:135px;background:#ffffff;"></div>
<div style="left:394px;top:543px;width:466px;height:20px;background:#99add1;"></div>
<div style="left:394px;top:543px;width:466px;height:1px;background:#fbfbf4;"></div>
<div style="left:394px;top:544px;width:1px;height:19px;background:#ffffff;"></div>
<div style="left:393px;top:563px;width:467px;height:1px;background:#b4b09e;"></div>
<div style="left:394px;top:564px;width:39px;height:95px;background:#99add1;"></div>
<div style="left:434px;top:584px;width:426px;height:19px;background:#ededfb;"></div>
<div style="left:433px;top:543px;width:1px;height:21px;background:#b4b09e;"></div>
<div style="left:434px;top:544px;width:1px;height:19px;background:#ffffff;"></div>
<div style="left:433px;top:564px;width:1px;height:114px;background:#b4b09e;"></div>
<div style="left:493px;top:543px;width:1px;height:21px;background:#b4b09e;"></div>
<div style="left:494px;top:544px;width:1px;height:19px;background:#ffffff;"></div>
<div style="left:493px;top:564px;width:1px;height:114px;background:#b4b09e;"></div>
<div style="left:533px;top:543px;width:1px;height:21px;background:#b4b09e;"></div>
<div style="left:534px;top:544px;width:1px;height:19px;background:#ffffff;"></div>
<div style="left:533px;top:564px;width:1px;height:114px;background:#b4b09e;"></div>
<div style="left:573px;top:543px;width:1px;height:21px;background:#b4b09e;"></div>
<div style="left:574px;top:544px;width:1px;height:19px;background:#ffffff;"></div>
<div style="left:573px;top:564px;width:1px;height:114px;background:#b4b09e;"></div>
<div style="left:613px;top:543px;width:1px;height:21px;background:#b4b09e;"></div>
<div style="left:614px;top:544px;width:1px;height:19px;background:#ffffff;"></div>
<div style="left:613px;top:564px;width:1px;height:114px;background:#b4b09e;"></div>
<div style="left:653px;top:543px;width:1px;height:21px;background:#b4b09e;"></div>
<div style="left:654px;top:544px;width:1px;height:19px;background:#ffffff;"></div>
<div style="left:653px;top:564px;width:1px;height:114px;background:#b4b09e;"></div>
<div style="left:693px;top:543px;width:1px;height:21px;background:#b4b09e;"></div>
<div style="left:694px;top:544px;width:1px;height:19px;background:#ffffff;"></div>
<div style="left:693px;top:564px;width:1px;height:114px;background:#b4b09e;"></div>
<div style="left:733px;top:543px;width:1px;height:21px;background:#b4b09e;"></div>
<div style="left:734px;top:544px;width:1px;height:19px;background:#ffffff;"></div>
<div style="left:733px;top:564px;width:1px;height:114px;background:#b4b09e;"></div>
<div style="left:773px;top:543px;width:1px;height:21px;background:#b4b09e;"></div>
<div style="left:774px;top:544px;width:1px;height:19px;background:#ffffff;"></div>
<div style="left:773px;top:564px;width:1px;height:114px;background:#b4b09e;"></div>
<div style="left:813px;top:543px;width:1px;height:21px;background:#b4b09e;"></div>
<div style="left:814px;top:544px;width:1px;height:19px;background:#ffffff;"></div>
<div style="left:813px;top:564px;width:1px;height:114px;background:#b4b09e;"></div>
<div style="left:393px;top:583px;width:467px;height:1px;background:#b4b09e;"></div>
<div style="left:395px;top:584px;width:38px;height:1px;background:#ffffff;"></div>
<div style="left:393px;top:603px;width:467px;height:1px;background:#b4b09e;"></div>
<div style="left:395px;top:604px;width:38px;height:1px;background:#ffffff;"></div>
<div style="left:393px;top:623px;width:467px;height:1px;background:#b4b09e;"></div>
<div style="left:395px;top:624px;width:38px;height:1px;background:#ffffff;"></div>
<div style="left:395px;top:564px;width:38px;height:1px;background:#ffffff;"></div>
<div style="left:394px;top:564px;width:1px;height:95px;background:#ffffff;"></div>
<div style="left:393px;top:658px;width:467px;height:1px;background:#b4b09e;"></div>
<div style="left:394px;top:659px;width:466px;height:19px;background:#ffffb5;"></div>
<div style="left:394px;top:659px;width:39px;height:19px;background:#99add1;"></div>
<div style="left:395px;top:659px;width:38px;height:1px;background:#ffffff;"></div>
<div style="left:394px;top:659px;width:1px;height:19px;background:#ffffff;"></div>
<div style="left:433px;top:659px;width:1px;height:19px;background:#b4b09e;"></div>
<div style="left:493px;top:659px;width:1px;height:19px;background:#b4b09e;"></div>
<div style="left:533px;top:659px;width:1px;height:19px;background:#b4b09e;"></div>
<div style="left:573px;top:659px;width:1px;height:19px;background:#b4b09e;"></div>
<div style="left:613px;top:659px;width:1px;height:19px;background:#b4b09e;"></div>
<div style="left:653px;top:659px;width:1px;height:19px;background:#b4b09e;"></div>
<div style="left:693px;top:659px;width:1px;height:19px;background:#b4b09e;"></div>
<div style="left:733px;top:659px;width:1px;height:19px;background:#b4b09e;"></div>
<div style="left:773px;top:659px;width:1px;height:19px;background:#b4b09e;"></div>
<div style="left:813px;top:659px;width:1px;height:19px;background:#b4b09e;"></div>
<div class="s" style="left:451px;top:548px;color:#000">颜色</div>
<div class="s" style="left:507px;top:548px;color:#000"><i class="L">X</i><i class="L">S</i></div>
<div class="s" style="left:550px;top:548px;color:#000"><i class="L">S</i></div>
<div class="s" style="left:590px;top:548px;color:#000"><i class="L">M</i></div>
<div class="s" style="left:630px;top:548px;color:#000"><i class="L">L</i></div>
<div class="s" style="left:667px;top:548px;color:#000"><i class="L">X</i><i class="L">L</i></div>
<div class="s" style="left:704px;top:548px;color:#000"><i class="L">X</i><i class="L">X</i><i class="L">L</i></div>
<div class="s" style="left:741px;top:548px;color:#000"><i class="L">X</i><i class="L">X</i><i class="L">X</i><i class="L">L</i></div>
<div class="s" style="left:781px;top:548px;color:#000">均码</div>
<div class="s" style="left:825px;top:548px;color:#000">合计</div>
<div class="s" style="left:424px;top:568px;color:#000"><i>1</i></div>
<div class="s" style="left:436px;top:568px;color:#000">深蓝</div>
<div class="s" style="left:524px;top:568px;color:#000"><i>1</i></div>
<div class="s" style="left:564px;top:568px;color:#000"><i>1</i></div>
<div class="s" style="left:604px;top:568px;color:#000"><i>1</i></div>
<div class="s" style="left:644px;top:568px;color:#000"><i>1</i></div>
<div class="s" style="left:684px;top:568px;color:#000"><i>1</i></div>
<div class="s" style="left:851px;top:568px;color:#ff0000"><i>5</i></div>
<div class="s" style="left:424px;top:588px;color:#000"><i>2</i></div>
<div class="s" style="left:436px;top:588px;color:#000">粉红</div>
<div class="s" style="left:524px;top:588px;color:#000"><i>1</i></div>
<div class="s" style="left:564px;top:588px;color:#000"><i>1</i></div>
<div class="s" style="left:604px;top:588px;color:#000"><i>1</i></div>
<div class="s" style="left:644px;top:588px;color:#000"><i>1</i></div>
<div class="s" style="left:684px;top:588px;color:#000"><i>1</i></div>
<div class="s" style="left:851px;top:588px;color:#ff0000"><i>5</i></div>
<svg style="left:399px;top:589px" width="7" height="10" viewBox="0 0 7 10"><path d="M0.5 0 L6 4.5 L0.5 9 Z" fill="#000"/></svg>
<svg style="left:399px;top:608px" width="11" height="11" viewBox="0 0 11 11"><g stroke="#000" stroke-width="1.3"><line x1="5" y1="0.5" x2="5" y2="10.5"/><line x1="0.5" y1="5.5" x2="9.5" y2="5.5"/><line x1="1.5" y1="2" x2="8.5" y2="9"/><line x1="8.5" y1="2" x2="1.5" y2="9"/></g></svg>
<div class="s" style="left:424px;top:608px;color:#000"><i>3</i></div>
<div class="s" style="left:407px;top:662px;color:#000">合计</div>
<div class="s" style="left:524px;top:663px;color:#ff0000"><i>2</i></div>
<div class="s" style="left:564px;top:663px;color:#ff0000"><i>2</i></div>
<div class="s" style="left:604px;top:663px;color:#ff0000"><i>2</i></div>
<div class="s" style="left:644px;top:663px;color:#ff0000"><i>2</i></div>
<div class="s" style="left:684px;top:663px;color:#ff0000"><i>2</i></div>
<div class="s" style="left:724px;top:663px;color:#ff0000"><i>0</i></div>
<div class="s" style="left:764px;top:663px;color:#ff0000"><i>0</i></div>
<div class="s" style="left:804px;top:663px;color:#ff0000"><i>0</i></div>
<div class="s" style="left:845px;top:663px;color:#ff0000"><i>1</i><i>0</i></div>
</body></html>
